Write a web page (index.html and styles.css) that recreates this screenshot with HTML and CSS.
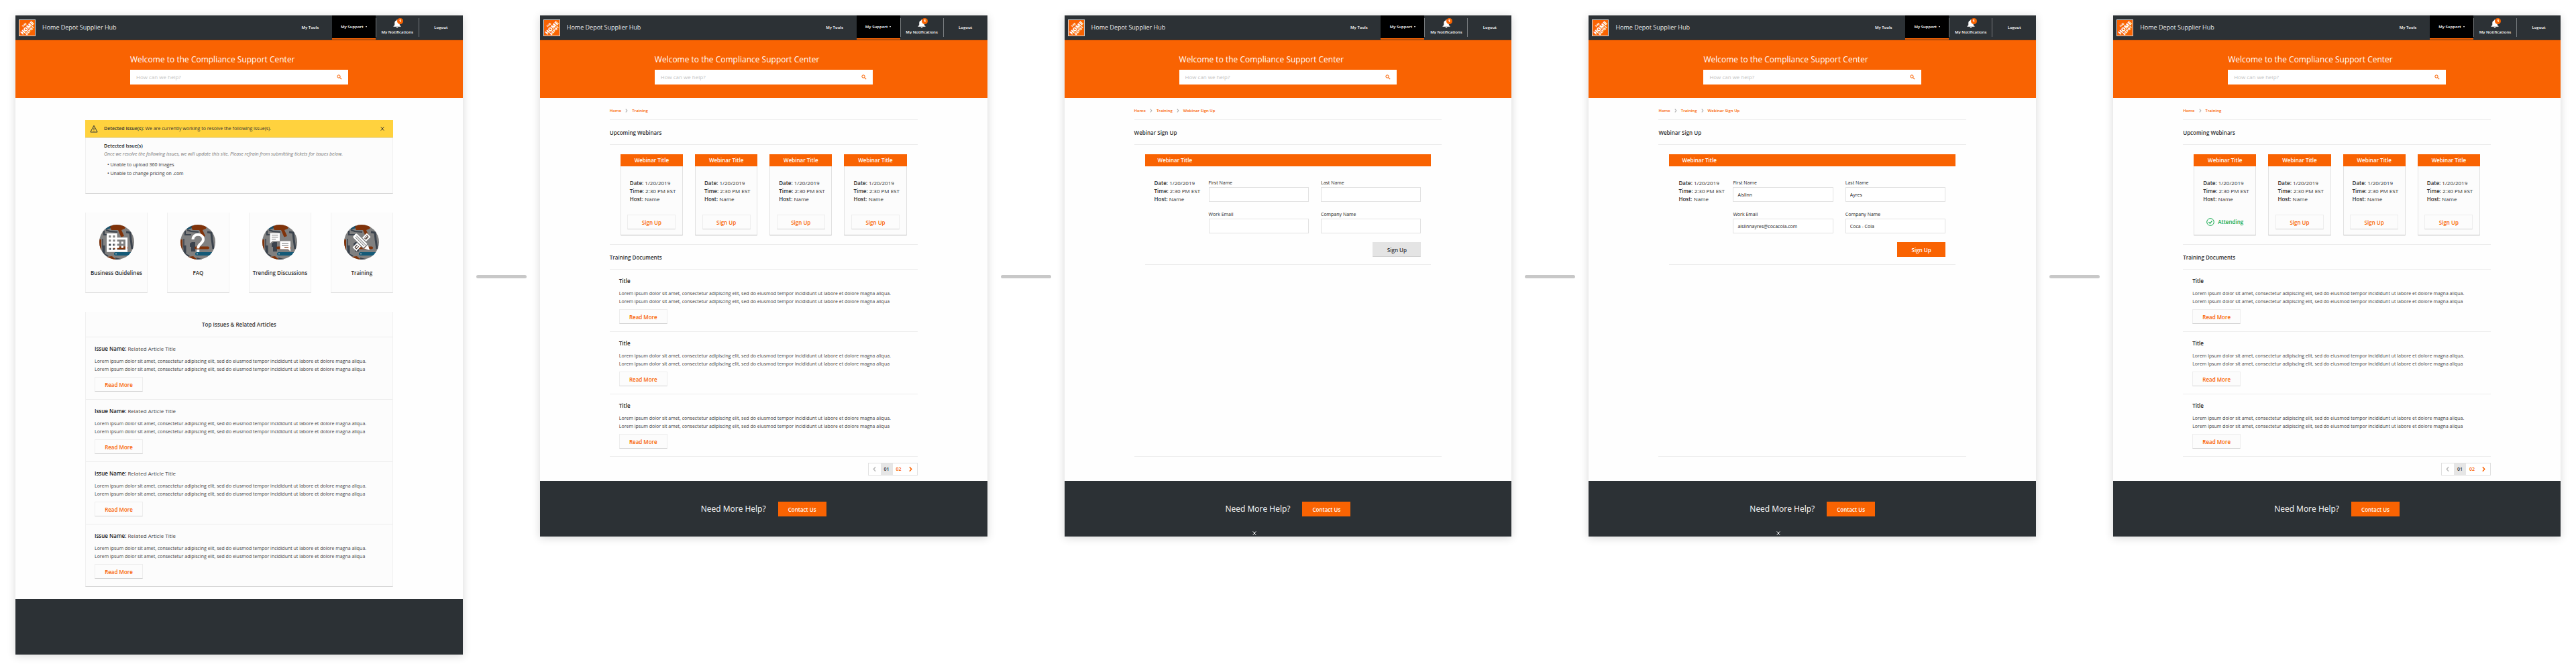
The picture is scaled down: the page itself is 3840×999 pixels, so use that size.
FILE: index.html
```html
<!DOCTYPE html>
<html lang="en">
<head>
<meta charset="utf-8">
<title>Home Depot Supplier Hub</title>
<link rel="stylesheet" href="styles.css">
</head>
<body>
<svg class="defs" aria-hidden="true">
  <symbol id="cross" viewBox="0 0 8 8">
    <path d="M1 .5l6 7M7 .5l-6 7" stroke="currentColor" stroke-width="1.300"/>
  </symbol>
  <symbol id="bell" viewBox="0 0 24 24">
    <path fill="#fff" d="M12 24c1.600 0 2.800-1 2.800-2.500H9.200C9.200 23 10.400 24 12 24zM19.500 16V9.500c0-3.800-2-6.800-5.700-7.600V1.500a1.800 1.800 0 0 0-3.600 0v.4C6.500 2.700 4.500 5.700 4.500 9.500V16L1 19v1.500h22V19z"/>
  </symbol>
  <symbol id="search" viewBox="0 0 24 24">
    <circle cx="9" cy="9" r="6.500" fill="none" stroke="#f96302" stroke-width="3"/>
    <path d="M14 14l7.500 7.500" stroke="#f96302" stroke-width="3.500"/>
  </symbol>
  <symbol id="warning" viewBox="0 0 12 12">
    <path d="M6 1.200L11.200 11H.8z" fill="none" stroke="#33373a" stroke-width="1"/>
    <path d="M6 4.500v3.300M6 8.700v1" stroke="#33373a" stroke-width="1"/>
  </symbol>
  <symbol id="check" viewBox="0 0 12 12">
    <circle cx="6" cy="6" r="5.300" fill="none" stroke="#12a84c" stroke-width="1"/>
    <path d="M3.500 6.200l1.900 1.900 3.300-4" fill="none" stroke="#12a84c" stroke-width="1.200"/>
  </symbol>
  <symbol id="chevron" viewBox="0 0 6 10">
    <path d="M1 1l3.500 4L1 9" fill="none" stroke="currentColor" stroke-width="1.800"/>
  </symbol>
  <clipPath id="disc"><circle cx="26" cy="26" r="26"/></clipPath>
  <symbol id="tools" viewBox="0 0 52 52">
    <g clip-path="url(#disc)">
      <rect width="52" height="52" fill="#808080"/>
      <path d="M8 0h10v5l-7 2H8z" fill="#17506b"/>
      <path d="M16 3l5-3h19l-2 6-5 2 4 9-4.500 1.500L28 8H18z" fill="#80330a"/>
      <path d="M7 9v6h9M10 8l6 2 11 1" fill="none" stroke="#3b434d" stroke-width="2.200"/>
      <path d="M40 11l6 1 1 10 2 14" fill="none" stroke="#3b434d" stroke-width="3"/>
      <path d="M5 21v13" stroke="#3b434d" stroke-width="1.500"/>
      <path d="M6.500 31v12" stroke="#3b434d" stroke-width="4"/>
      <path d="M1.500 22v18" stroke="#80330a" stroke-width="3"/>
      <path d="M14 28l3-2h5v14h-6v-7h-2z" fill="#3b434d"/>
      <rect x="21" y="32.500" width="22" height="4" rx="2" fill="#80330a"/>
      <path d="M24.500 41H52v5H24.500a2.500 2.500 0 0 1 0-5z" fill="#145a78"/>
      <circle cx="25" cy="43.500" r="1" fill="#a6b8c0"/>
      <path d="M5 42l9 4-3 2z" fill="#3b434d"/>
      <path d="M11 48l8-1 6 5H12z" fill="#80330a"/>
      <path d="M24 49l8 2v1h-8z" fill="#3b434d"/>
    </g>
  </symbol>
  <symbol id="building" viewBox="0 0 52 52">
    <path fill="#fff" transform="translate(8 8.300) scale(1.550)" d="M12 7V3H2v18h20V7H12zM6 19H4v-2h2v2zm0-4H4v-2h2v2zm0-4H4V9h2v2zm0-4H4V5h2v2zm4 12H8v-2h2v2zm0-4H8v-2h2v2zm0-4H8V9h2v2zm0-4H8V5h2v2zm10 12h-8v-2h2v-2h-2v-2h2v-2h-2V9h8v10zm-2-8h-2v2h2v-2zm0 4h-2v2h2v-2z"/>
  </symbol>
  <symbol id="question" viewBox="0 0 52 52">
    <path d="M18.500 22c0-10 15.500-9.500 15.500 0 0 6-7.800 6-7.800 13.500" fill="none" stroke="#fff" stroke-width="4"/>
    <rect x="24.200" y="37" width="4" height="4" fill="#fff"/>
  </symbol>
  <symbol id="chat" viewBox="0 0 52 52">
    <path d="M11.500 12.500h14.500v12H15l-3.500 3.500zM26.500 24.500H42V40l-3.500-3.500h-12z" fill="#fff"/>
    <path d="M14 15.500h9.500M14 18.500h9.500M14 21.500h6M29 28h10M29 31h10" stroke="#6f6f6f" stroke-width="1"/>
    <path d="M33 34h6" stroke="#80330a" stroke-width="1.200"/>
  </symbol>
  <symbol id="pencil" viewBox="0 0 52 52">
    <g transform="rotate(-45 26 26)">
      <path d="M11 22h30v8H11z" fill="#fff"/>
      <path d="M13.500 24.500h5M13.500 27.500h5M13.500 24v4M33.500 24.500v3h5M36 27v-3M38.500 28v-4" fill="none" stroke="#4a3a33" stroke-width="1.200"/>
    </g>
    <g transform="rotate(45 26 26)">
      <path d="M12 20.500h23v11H12z" fill="#808080"/>
      <path d="M13 22h21v8H13a2 2 0 0 1-2-2v-4a2 2 0 0 1 2-2zM35.500 22l7.500 4-7.500 4z" fill="#fff"/>
      <path d="M14 24.700h19M14 27.300h19" stroke="#808080" stroke-width="1"/>
    </g>
  </symbol>
</svg>

<div class="board">

  <section class="frame">
    <header class="topbar">
      <svg class="logo" viewBox="0 0 25 25" role="img" aria-label="The Home Depot"><rect width="25" height="25" fill="#d5d7d8"/><rect x="1" y="1" width="23" height="23" fill="#f96302"/><g transform="rotate(-45 12.500 12.500)"><text x="12.500" y="8" font-size="4">THE</text><text x="12.500" y="15.500" font-size="8">HOME</text><text x="12.500" y="20" font-size="5">DEPOT</text></g></svg>
      <span class="brand">Home Depot Supplier Hub</span>
      <nav class="nav">
        <a class="nav-item" href="#">My Tools</a>
        <a class="nav-item nav-active" href="#">My Support <i class="caret"></i></a>
        <a class="nav-item nav-notify" href="#"><span class="bell"><svg><use href="#bell"/></svg><b class="badge">1</b></span>My Notifications</a>
        <a class="nav-item" href="#">Logout</a>
      </nav>
    </header>
    <div class="hero">
      <h1>Welcome to the Compliance Support Center</h1>
      <form class="search"><input type="search" aria-label="Search" placeholder="How can we help?"><button aria-label="Search"><svg><use href="#search"/></svg></button></form>
    </div>
    <main class="main home">
      <section class="alert">
        <div class="alert-bar"><svg class="warn"><use href="#warning"/></svg><p><b>Detected Issue(s):</b> We are currently working to resolve the following issue(s).</p><button class="close" aria-label="Close"><svg><use href="#cross"/></svg></button></div>
        <div class="alert-body">
          <h2>Detected Issue(s)</h2>
          <p>Once we resolve the following issues, we will update this site. Please refrain from submitting tickets for issues below.</p>
          <ul><li>Unable to upload 360 images</li><li>Unable to change pricing on .com</li></ul>
        </div>
      </section>
      <div class="tiles">
        <a class="tile" href="#"><svg><use href="#tools"/><use href="#building"/></svg>Business Guidelines</a>
        <a class="tile" href="#"><svg><use href="#tools"/><use href="#question"/></svg>FAQ</a>
        <a class="tile" href="#"><svg><use href="#tools"/><use href="#chat"/></svg>Trending Discussions</a>
        <a class="tile" href="#"><svg><use href="#tools"/><use href="#pencil"/></svg>Training</a>
      </div>
      <section class="issues">
        <h2>Top Issues &amp; Related Articles</h2>
        <article class="entry"><h3>Issue Name: <span>Related Article Title</span></h3><p>Lorem ipsum dolor sit amet, consectetur adipiscing elit, sed do eiusmod tempor incididunt ut labore et dolore magna aliqua.<br>Lorem ipsum dolor sit amet, consectetur adipiscing elit, sed do eiusmod tempor incididunt ut labore et dolore magna aliqua</p><button class="btn">Read More</button></article>
        <article class="entry"><h3>Issue Name: <span>Related Article Title</span></h3><p>Lorem ipsum dolor sit amet, consectetur adipiscing elit, sed do eiusmod tempor incididunt ut labore et dolore magna aliqua.<br>Lorem ipsum dolor sit amet, consectetur adipiscing elit, sed do eiusmod tempor incididunt ut labore et dolore magna aliqua</p><button class="btn">Read More</button></article>
        <article class="entry"><h3>Issue Name: <span>Related Article Title</span></h3><p>Lorem ipsum dolor sit amet, consectetur adipiscing elit, sed do eiusmod tempor incididunt ut labore et dolore magna aliqua.<br>Lorem ipsum dolor sit amet, consectetur adipiscing elit, sed do eiusmod tempor incididunt ut labore et dolore magna aliqua</p><button class="btn">Read More</button></article>
        <article class="entry"><h3>Issue Name: <span>Related Article Title</span></h3><p>Lorem ipsum dolor sit amet, consectetur adipiscing elit, sed do eiusmod tempor incididunt ut labore et dolore magna aliqua.<br>Lorem ipsum dolor sit amet, consectetur adipiscing elit, sed do eiusmod tempor incididunt ut labore et dolore magna aliqua</p><button class="btn">Read More</button></article>
      </section>
    </main>
    <footer class="footer"></footer>
  </section>

  <div class="link"></div>

  <section class="frame">
    <header class="topbar">
      <svg class="logo" viewBox="0 0 25 25" role="img" aria-label="The Home Depot"><rect width="25" height="25" fill="#d5d7d8"/><rect x="1" y="1" width="23" height="23" fill="#f96302"/><g transform="rotate(-45 12.500 12.500)"><text x="12.500" y="8" font-size="4">THE</text><text x="12.500" y="15.500" font-size="8">HOME</text><text x="12.500" y="20" font-size="5">DEPOT</text></g></svg>
      <span class="brand">Home Depot Supplier Hub</span>
      <nav class="nav">
        <a class="nav-item" href="#">My Tools</a>
        <a class="nav-item nav-active" href="#">My Support <i class="caret"></i></a>
        <a class="nav-item nav-notify" href="#"><span class="bell"><svg><use href="#bell"/></svg><b class="badge">1</b></span>My Notifications</a>
        <a class="nav-item" href="#">Logout</a>
      </nav>
    </header>
    <div class="hero">
      <h1>Welcome to the Compliance Support Center</h1>
      <form class="search"><input type="search" aria-label="Search" placeholder="How can we help?"><button aria-label="Search"><svg><use href="#search"/></svg></button></form>
    </div>
    <main class="main">
      <nav class="crumbs"><a href="#">Home</a><svg><use href="#chevron"/></svg><a href="#">Training</a></nav>
      <h2 class="section-title">Upcoming Webinars</h2>
      <div class="webinars">
        <article class="webinar"><h3>Webinar Title</h3><p class="details"><b>Date:</b> 1/20/2019<br><b>Time:</b> 2:30 PM EST<br><b>Host:</b> Name</p><button class="btn">Sign Up</button></article>
        <article class="webinar"><h3>Webinar Title</h3><p class="details"><b>Date:</b> 1/20/2019<br><b>Time:</b> 2:30 PM EST<br><b>Host:</b> Name</p><button class="btn">Sign Up</button></article>
        <article class="webinar"><h3>Webinar Title</h3><p class="details"><b>Date:</b> 1/20/2019<br><b>Time:</b> 2:30 PM EST<br><b>Host:</b> Name</p><button class="btn">Sign Up</button></article>
        <article class="webinar"><h3>Webinar Title</h3><p class="details"><b>Date:</b> 1/20/2019<br><b>Time:</b> 2:30 PM EST<br><b>Host:</b> Name</p><button class="btn">Sign Up</button></article>
      </div>
      <h2 class="section-title">Training Documents</h2>
      <article class="entry"><h3>Title</h3><p>Lorem ipsum dolor sit amet, consectetur adipiscing elit, sed do eiusmod tempor incididunt ut labore et dolore magna aliqua.<br>Lorem ipsum dolor sit amet, consectetur adipiscing elit, sed do eiusmod tempor incididunt ut labore et dolore magna aliqua</p><button class="btn">Read More</button></article>
      <article class="entry"><h3>Title</h3><p>Lorem ipsum dolor sit amet, consectetur adipiscing elit, sed do eiusmod tempor incididunt ut labore et dolore magna aliqua.<br>Lorem ipsum dolor sit amet, consectetur adipiscing elit, sed do eiusmod tempor incididunt ut labore et dolore magna aliqua</p><button class="btn">Read More</button></article>
      <article class="entry"><h3>Title</h3><p>Lorem ipsum dolor sit amet, consectetur adipiscing elit, sed do eiusmod tempor incididunt ut labore et dolore magna aliqua.<br>Lorem ipsum dolor sit amet, consectetur adipiscing elit, sed do eiusmod tempor incididunt ut labore et dolore magna aliqua</p><button class="btn">Read More</button></article>
      <nav class="pager" aria-label="Pages"><button class="prev" aria-label="Previous" disabled><svg><use href="#chevron"/></svg></button><button class="current">01</button><button>02</button><button aria-label="Next"><svg><use href="#chevron"/></svg></button></nav>
    </main>
    <footer class="footer"><div class="help"><span>Need More Help?</span><button class="btn btn-primary">Contact Us</button></div></footer>
  </section>

  <div class="link"></div>

  <section class="frame">
    <header class="topbar">
      <svg class="logo" viewBox="0 0 25 25" role="img" aria-label="The Home Depot"><rect width="25" height="25" fill="#d5d7d8"/><rect x="1" y="1" width="23" height="23" fill="#f96302"/><g transform="rotate(-45 12.500 12.500)"><text x="12.500" y="8" font-size="4">THE</text><text x="12.500" y="15.500" font-size="8">HOME</text><text x="12.500" y="20" font-size="5">DEPOT</text></g></svg>
      <span class="brand">Home Depot Supplier Hub</span>
      <nav class="nav">
        <a class="nav-item" href="#">My Tools</a>
        <a class="nav-item nav-active" href="#">My Support <i class="caret"></i></a>
        <a class="nav-item nav-notify" href="#"><span class="bell"><svg><use href="#bell"/></svg><b class="badge">1</b></span>My Notifications</a>
        <a class="nav-item" href="#">Logout</a>
      </nav>
    </header>
    <div class="hero">
      <h1>Welcome to the Compliance Support Center</h1>
      <form class="search"><input type="search" aria-label="Search" placeholder="How can we help?"><button aria-label="Search"><svg><use href="#search"/></svg></button></form>
    </div>
    <main class="main main-form">
      <nav class="crumbs"><a href="#">Home</a><svg><use href="#chevron"/></svg><a href="#">Training</a><svg><use href="#chevron"/></svg><a href="#">Webinar Sign Up</a></nav>
      <h2 class="section-title">Webinar Sign Up</h2>
      <section class="signup">
        <h3>Webinar Title</h3>
        <form class="signup-form">
          <p class="details"><b>Date:</b> 1/20/2019<br><b>Time:</b> 2:30 PM EST<br><b>Host:</b> Name</p>
          <div class="fields">
            <label>First Name<input type="text"></label>
            <label>Last Name<input type="text"></label>
            <label>Work Email<input type="email"></label>
            <label>Company Name<input type="text"></label>
            <button class="btn btn-disabled" disabled>Sign Up</button>
          </div>
        </form>
      </section>
      <hr class="rule">
    </main>
    <footer class="footer"><div class="help"><span>Need More Help?</span><button class="btn btn-primary">Contact Us</button></div><button class="dismiss" aria-label="Close"><svg><use href="#cross"/></svg></button></footer>
  </section>

  <div class="link"></div>

  <section class="frame">
    <header class="topbar">
      <svg class="logo" viewBox="0 0 25 25" role="img" aria-label="The Home Depot"><rect width="25" height="25" fill="#d5d7d8"/><rect x="1" y="1" width="23" height="23" fill="#f96302"/><g transform="rotate(-45 12.500 12.500)"><text x="12.500" y="8" font-size="4">THE</text><text x="12.500" y="15.500" font-size="8">HOME</text><text x="12.500" y="20" font-size="5">DEPOT</text></g></svg>
      <span class="brand">Home Depot Supplier Hub</span>
      <nav class="nav">
        <a class="nav-item" href="#">My Tools</a>
        <a class="nav-item nav-active" href="#">My Support <i class="caret"></i></a>
        <a class="nav-item nav-notify" href="#"><span class="bell"><svg><use href="#bell"/></svg><b class="badge">1</b></span>My Notifications</a>
        <a class="nav-item" href="#">Logout</a>
      </nav>
    </header>
    <div class="hero">
      <h1>Welcome to the Compliance Support Center</h1>
      <form class="search"><input type="search" aria-label="Search" placeholder="How can we help?"><button aria-label="Search"><svg><use href="#search"/></svg></button></form>
    </div>
    <main class="main main-form">
      <nav class="crumbs"><a href="#">Home</a><svg><use href="#chevron"/></svg><a href="#">Training</a><svg><use href="#chevron"/></svg><a href="#">Webinar Sign Up</a></nav>
      <h2 class="section-title">Webinar Sign Up</h2>
      <section class="signup">
        <h3>Webinar Title</h3>
        <form class="signup-form">
          <p class="details"><b>Date:</b> 1/20/2019<br><b>Time:</b> 2:30 PM EST<br><b>Host:</b> Name</p>
          <div class="fields">
            <label>First Name<input type="text" value="Aislinn"></label>
            <label>Last Name<input type="text" value="Ayres"></label>
            <label>Work Email<input type="email" value="aislinnayres@cocacola.com"></label>
            <label>Company Name<input type="text" value="Coca - Cola"></label>
            <button class="btn btn-primary">Sign Up</button>
          </div>
        </form>
      </section>
      <hr class="rule">
    </main>
    <footer class="footer"><div class="help"><span>Need More Help?</span><button class="btn btn-primary">Contact Us</button></div><button class="dismiss" aria-label="Close"><svg><use href="#cross"/></svg></button></footer>
  </section>

  <div class="link"></div>

  <section class="frame">
    <header class="topbar">
      <svg class="logo" viewBox="0 0 25 25" role="img" aria-label="The Home Depot"><rect width="25" height="25" fill="#d5d7d8"/><rect x="1" y="1" width="23" height="23" fill="#f96302"/><g transform="rotate(-45 12.500 12.500)"><text x="12.500" y="8" font-size="4">THE</text><text x="12.500" y="15.500" font-size="8">HOME</text><text x="12.500" y="20" font-size="5">DEPOT</text></g></svg>
      <span class="brand">Home Depot Supplier Hub</span>
      <nav class="nav">
        <a class="nav-item" href="#">My Tools</a>
        <a class="nav-item nav-active" href="#">My Support <i class="caret"></i></a>
        <a class="nav-item nav-notify" href="#"><span class="bell"><svg><use href="#bell"/></svg><b class="badge">1</b></span>My Notifications</a>
        <a class="nav-item" href="#">Logout</a>
      </nav>
    </header>
    <div class="hero">
      <h1>Welcome to the Compliance Support Center</h1>
      <form class="search"><input type="search" aria-label="Search" placeholder="How can we help?"><button aria-label="Search"><svg><use href="#search"/></svg></button></form>
    </div>
    <main class="main">
      <nav class="crumbs"><a href="#">Home</a><svg><use href="#chevron"/></svg><a href="#">Training</a></nav>
      <h2 class="section-title">Upcoming Webinars</h2>
      <div class="webinars">
        <article class="webinar"><h3>Webinar Title</h3><p class="details"><b>Date:</b> 1/20/2019<br><b>Time:</b> 2:30 PM EST<br><b>Host:</b> Name</p><p class="attending"><svg><use href="#check"/></svg>Attending</p></article>
        <article class="webinar"><h3>Webinar Title</h3><p class="details"><b>Date:</b> 1/20/2019<br><b>Time:</b> 2:30 PM EST<br><b>Host:</b> Name</p><button class="btn">Sign Up</button></article>
        <article class="webinar"><h3>Webinar Title</h3><p class="details"><b>Date:</b> 1/20/2019<br><b>Time:</b> 2:30 PM EST<br><b>Host:</b> Name</p><button class="btn">Sign Up</button></article>
        <article class="webinar"><h3>Webinar Title</h3><p class="details"><b>Date:</b> 1/20/2019<br><b>Time:</b> 2:30 PM EST<br><b>Host:</b> Name</p><button class="btn">Sign Up</button></article>
      </div>
      <h2 class="section-title">Training Documents</h2>
      <article class="entry"><h3>Title</h3><p>Lorem ipsum dolor sit amet, consectetur adipiscing elit, sed do eiusmod tempor incididunt ut labore et dolore magna aliqua.<br>Lorem ipsum dolor sit amet, consectetur adipiscing elit, sed do eiusmod tempor incididunt ut labore et dolore magna aliqua</p><button class="btn">Read More</button></article>
      <article class="entry"><h3>Title</h3><p>Lorem ipsum dolor sit amet, consectetur adipiscing elit, sed do eiusmod tempor incididunt ut labore et dolore magna aliqua.<br>Lorem ipsum dolor sit amet, consectetur adipiscing elit, sed do eiusmod tempor incididunt ut labore et dolore magna aliqua</p><button class="btn">Read More</button></article>
      <article class="entry"><h3>Title</h3><p>Lorem ipsum dolor sit amet, consectetur adipiscing elit, sed do eiusmod tempor incididunt ut labore et dolore magna aliqua.<br>Lorem ipsum dolor sit amet, consectetur adipiscing elit, sed do eiusmod tempor incididunt ut labore et dolore magna aliqua</p><button class="btn">Read More</button></article>
      <nav class="pager" aria-label="Pages"><button class="prev" aria-label="Previous" disabled><svg><use href="#chevron"/></svg></button><button class="current">01</button><button>02</button><button aria-label="Next"><svg><use href="#chevron"/></svg></button></nav>
    </main>
    <footer class="footer"><div class="help"><span>Need More Help?</span><button class="btn btn-primary">Contact Us</button></div></footer>
  </section>

</div>
</body>
</html>
```
FILE: styles.css
```css
* { box-sizing: border-box; }
body {
  margin: 0;
  background: #fff;
  color: #333;
  font: 7px/12px "Open Sans", "Noto Sans", sans-serif;
}
h1, h2, h3, p, ul { margin: 0; padding: 0; font-weight: 400; }
a { color: inherit; text-decoration: none; }
button, input { font: inherit; color: inherit; margin: 0; padding: 0; border: 0; border-radius: 0; background: none; }
svg { display: block; }
.defs { position: absolute; width: 0; height: 0; }

.board { display: flex; align-items: flex-start; padding: 23px; }
.frame { flex: 1; min-width: 0; background: #fefefe; box-shadow: 0 2px 12px rgba(0, 0, 0, 0.16); }
.link { flex: 0 0 115px; padding: 387px 20px 0; }
.link::before { content: ""; display: block; height: 5px; border-radius: 3px; background: #c8c8c8; }

/* Top bar */
.topbar { display: flex; align-items: center; height: 37px; padding-left: 5px; background: #2c3135; border-bottom: 1px solid #54301c; color: #fff; }
.logo { width: 25px; height: 25px; overflow: visible; }
.logo text { font-family: "Open Sans", sans-serif; font-weight: 800; fill: #fff; text-anchor: middle; }
.brand { flex: 1; padding-left: 10px; font-size: 9px; color: #e8e8e8; }
.nav { display: flex; align-self: stretch; }
.nav-item { display: flex; align-items: center; justify-content: center; width: 65px; font-size: 6px; font-weight: 600; white-space: nowrap; }
.nav-active { gap: 3px; background: #000; border-bottom: 2px solid #f96302; }
.caret { border: 1px solid transparent; border-top: 2px solid #fff; border-bottom: 0; }
.nav-notify { flex-direction: column; margin: 4px 0; border: solid #777b7e; border-width: 0 1px; }
.bell { position: relative; }
.bell svg { width: 12px; height: 13px; }
.badge { position: absolute; left: 6px; top: -2px; width: 9px; height: 9px; border-radius: 50%; background: #f96302; font-size: 5px; line-height: 9px; text-align: center; }

/* Search banner */
.hero { height: 86px; padding: 20px 171px; background: #f96302; color: #fff; }
.hero h1 { font-size: 12px; line-height: 18px; white-space: nowrap; }
.search { display: flex; align-items: center; height: 22px; margin-top: 6px; padding: 0 9px; background: #fff; }
.search input { flex: 1; font-size: 8px; outline: 0; }
.search input::placeholder { color: #c4c4c4; }
.search svg { width: 8px; height: 8px; }

.main { display: flex; flex-direction: column; padding: 13px 104px 8px; }
.home { gap: 28px; padding-top: 33px; padding-bottom: 18px; }
.main-form { min-height: 571px; }

/* Alert */
.alert, .tile, .issues { background: #fcfcfc; border: 1px solid #f0f0f0; border-top: 0; border-bottom-color: #d8d8d8; }
.alert { height: 110px; }
.alert-bar { display: flex; align-items: center; height: 27px; margin: 0 -1px; padding: 0 13px 0 7px; background: #ffd23e; border-bottom: 1px solid #dcdcd4; }
.alert-bar p { flex: 1; padding-left: 9px; }
.alert-bar b, .details b { font-weight: 600; }
.warn { width: 12px; height: 12px; }
.close svg, .dismiss svg { width: 6px; height: 6px; }
.alert-body { padding: 6px 27px; }
.alert-body h2 { color: #111; font-size: 7px; font-weight: 600; }
.alert-body p { color: #777; font-style: italic; line-height: 11px; white-space: nowrap; }
.alert-body ul { padding: 4px 0 0 5px; list-style: none; line-height: 13px; }
.alert-body li::before { content: "• "; }

/* Topic tiles */
.tiles { display: flex; justify-content: space-between; }
.tile { display: flex; flex-direction: column; align-items: center; gap: 14px; width: 93px; height: 120px; padding-top: 18px; font-size: 8px; font-weight: 600; white-space: nowrap; }
.tile svg { width: 52px; height: 52px; }

/* Articles */
.issues h2 { height: 38px; border-bottom: 1px solid #ececec; font-size: 8px; font-weight: 600; line-height: 38px; text-align: center; }
.entry { height: 93px; padding: 11px 14px; border-bottom: 1px solid #ececec; }
.issues .entry { padding: 11px 13px; }
.issues .entry:last-child { border-bottom: 0; height: 92px; }
.entry h3 { color: #222; font-size: 8px; font-weight: 600; }
.entry h3 span { color: #444; font-weight: 400; }
.entry p { padding: 7px 0 5px; color: #444; white-space: nowrap; }

.btn { display: block; width: 72px; height: 22px; padding-top: 1px; background: #fcfcfc; border: 1px solid #eee; border-bottom-color: #d2d2d2; color: #f96302; font-size: 8px; font-weight: 600; line-height: 19px; }
.btn-primary { background: #f96302; border-color: #f96302; color: #fff; }
.btn-disabled { background: #e4e4e4; border-color: #e4e4e4; border-bottom-color: #d0d0d0; color: #333; }

/* Breadcrumbs and section headings */
.crumbs { display: flex; align-items: center; gap: 6px; padding-bottom: 7px; border-bottom: 1px solid #ececec; color: #f96302; font-size: 6px; font-weight: 600; }
.crumbs svg { width: 4px; height: 6px; color: #aaa; }
.section-title { height: 37px; border-bottom: 1px solid #ececec; font-size: 8px; font-weight: 600; line-height: 38px; }

/* Webinars */
.webinars { display: grid; grid-template-columns: repeat(4, 1fr); gap: 18px; padding: 14px 16px 13px; border-bottom: 1px solid #ececec; }
.webinar { height: 121px; background: #fcfcfc; border: 1px solid #e2e2e2; border-top: 0; border-bottom-color: #b8b8b8; }
.webinar h3 { margin: 0 -1px; background: #f96302; color: #fff; font-size: 8px; font-weight: 600; line-height: 18px; text-align: center; }
.details { font-size: 8px; white-space: nowrap; }
.webinar .details { padding: 19px 0 17px 13px; }
.webinar .btn { margin: 0 auto; }
.attending { display: flex; align-items: center; justify-content: center; gap: 5px; height: 22px; color: #12a84c; font-size: 8px; font-weight: 600; }
.attending svg { width: 12px; height: 12px; }

.pager { display: flex; align-self: flex-end; height: 19px; margin-top: 9px; background: #fff; border: 1px solid #e0e0e0; color: #f96302; }
.pager button { display: flex; align-items: center; justify-content: center; width: 18px; font-weight: 600; }
.pager svg { width: 5px; height: 9px; }
.pager .prev { color: #bbb; }
.pager .prev svg { transform: rotate(180deg); }
.pager .current { background: #e6e6e6; color: #333; }

/* Sign-up form */
.signup { margin: 14px 16px 0; border-bottom: 1px solid #ececec; }
.signup h3 { padding-left: 19px; background: #f96302; color: #fff; font-size: 8px; font-weight: 600; line-height: 18px; }
.signup-form { display: grid; grid-template-columns: 81px 1fr; padding: 19px 15px 11px 14px; }
.fields { display: grid; grid-template-columns: 1fr 1fr; gap: 13px 18px; color: #222; }
.fields input { display: block; width: 100%; height: 22px; padding: 0 6px; background: #fff; border: 1px solid #e2e2e2; }
.fields .btn { grid-column: 2; justify-self: end; }
.rule { width: 100%; margin: auto 0 28px; border: 0; border-top: 1px solid #ececec; }

/* Footer */
.footer { display: grid; grid-template-rows: 1fr; height: 83px; background: #2c3135; color: #fff; }
.help { display: flex; grid-area: 1 / 1; align-items: center; justify-content: center; gap: 18px; font-size: 12px; }
.dismiss { grid-area: 1 / 1; align-self: end; justify-self: start; margin: 0 0 2px 280px; }
```
